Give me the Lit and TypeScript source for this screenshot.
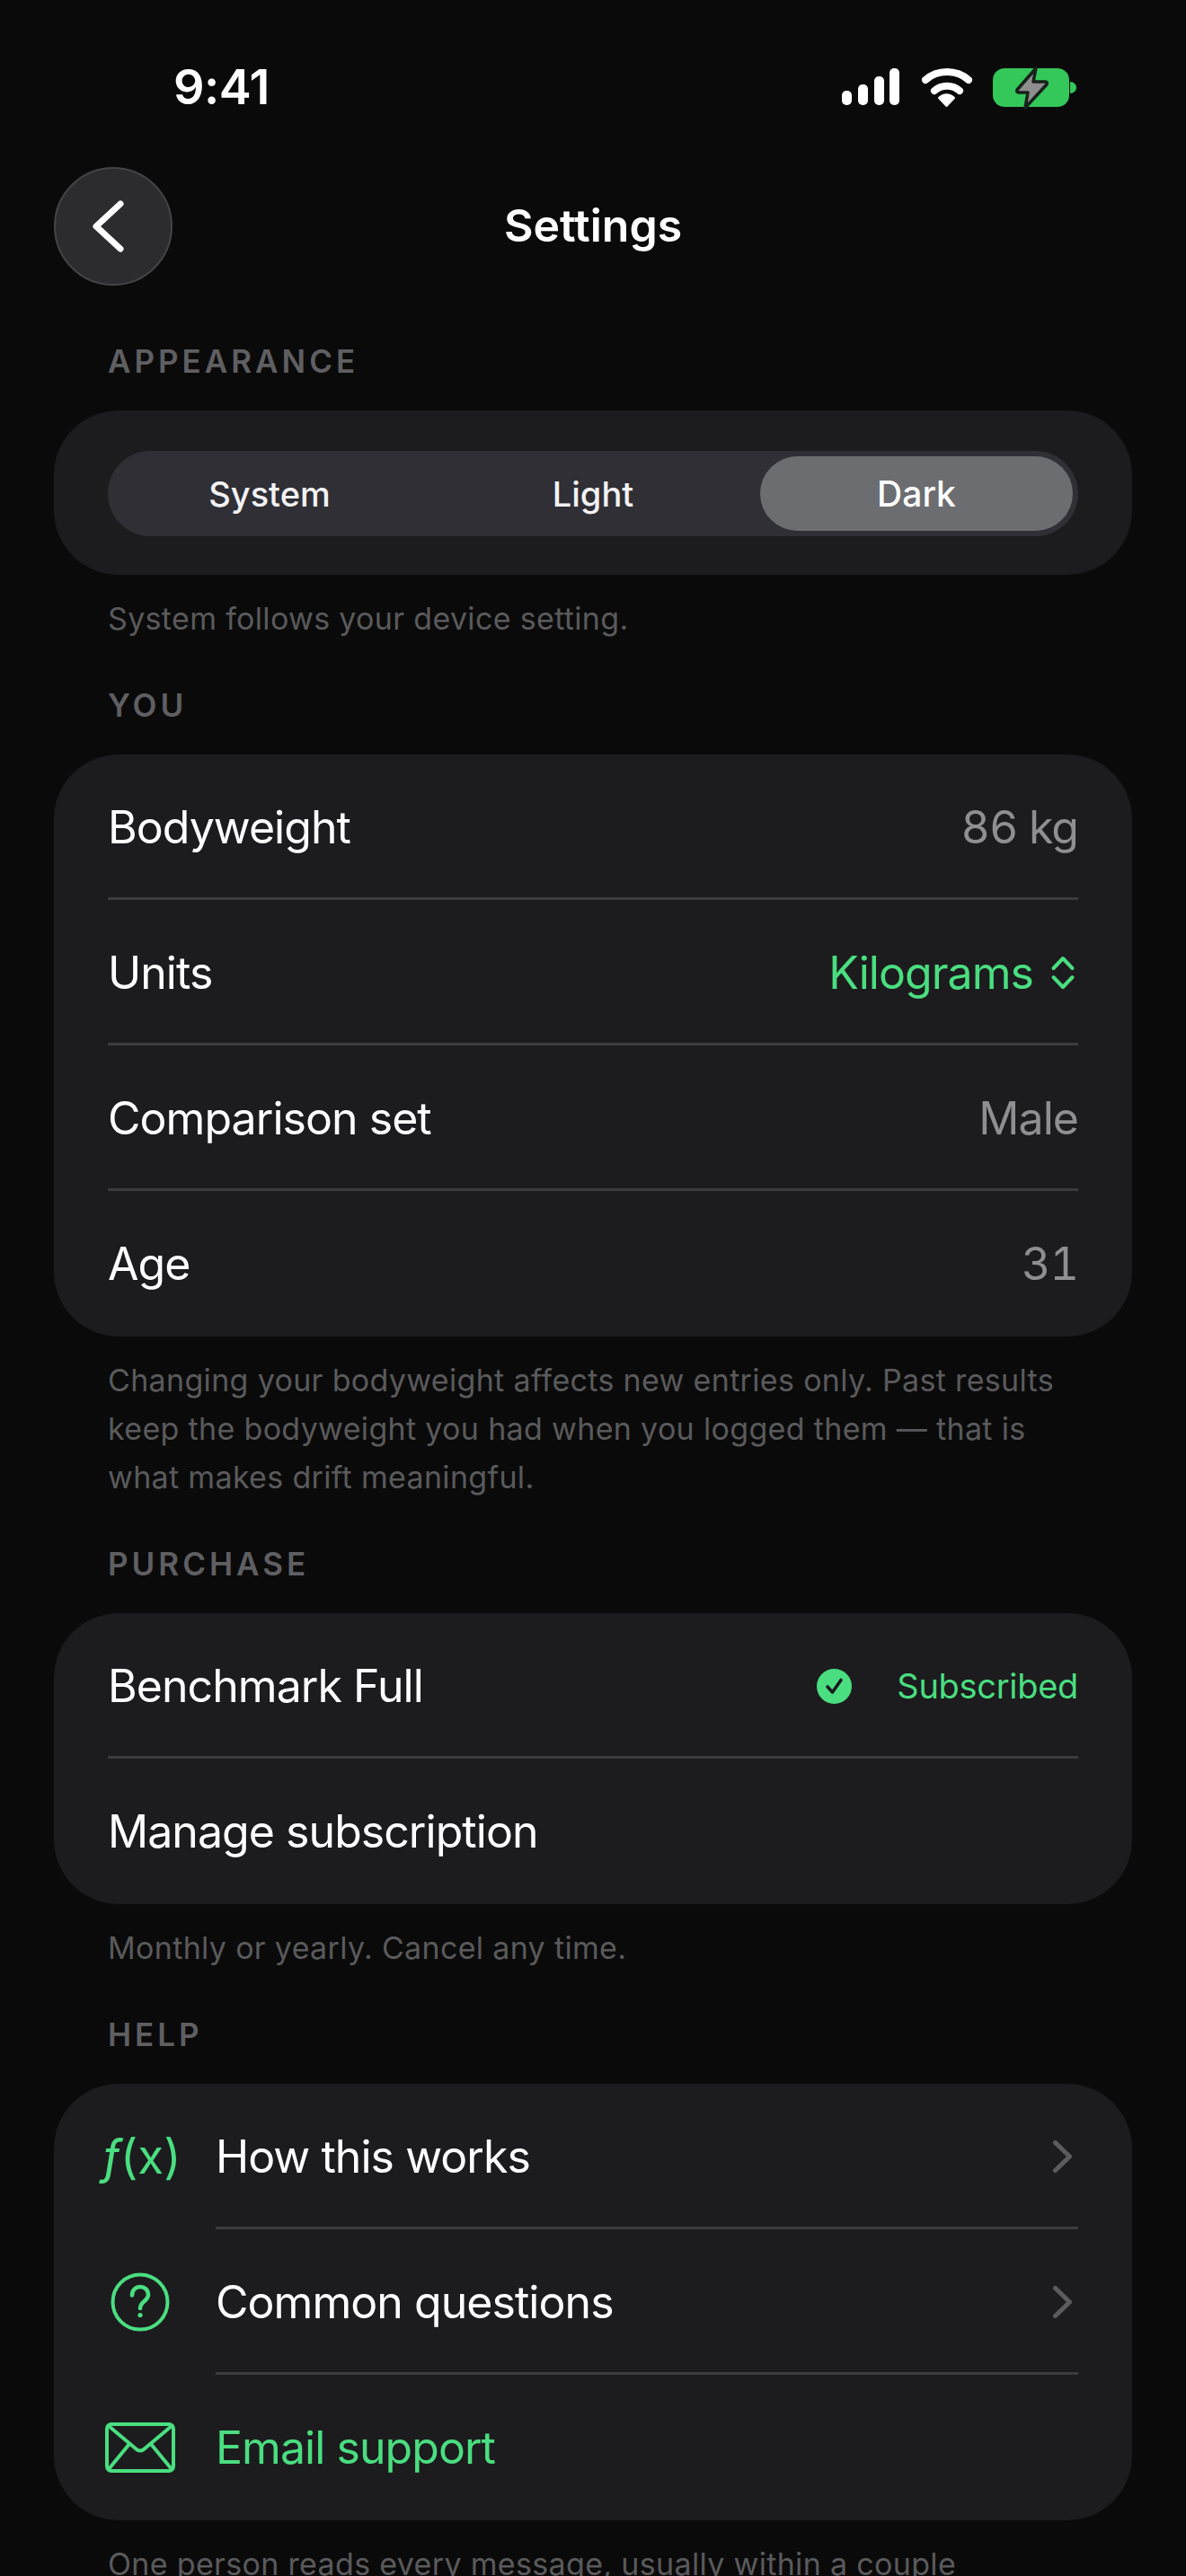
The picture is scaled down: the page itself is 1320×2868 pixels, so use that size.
import { LitElement, html, css, svg } from "lit";
import { customElement } from "lit/decorators.js";

const chevronRight = svg`<path d="M2.5 2.5 L18.5 18 L2.5 33.5" />`;

@customElement("app-root")
export class AppRoot extends LitElement {
  static styles = css`
    :host {
      display: block;
      width: 1320px;
      height: 2868px;
      overflow: hidden;
      background: #0a0a0a;
      color: #fff;
      font-family: Inter, "Noto Sans", sans-serif;
    }
    .status {
      height: 186px;
      display: flex;
      justify-content: space-between;
      padding: 0 122px 0 193px;
      box-sizing: border-box;
    }
    .time {
      font-size: 54px;
      font-weight: 600;
      line-height: 54px;
      margin-top: 70px;
      letter-spacing: -0.5px;
    }
    .status-icons {
      margin-top: 74px;
      display: block;
    }
    .nav {
      display: grid;
      grid-template-columns: 132px 1fr 132px;
      align-items: center;
      padding: 0 60px;
      height: 132px;
    }
    .back {
      width: 132px;
      height: 132px;
      box-sizing: border-box;
      border-radius: 50%;
      background: #2c2c2e;
      border: 2px solid #444446;
      display: flex;
      align-items: center;
      justify-content: center;
    }
    .back svg {
      display: block;
      margin-left: -12px;
    }
    .title {
      text-align: center;
      font-size: 50px;
      font-weight: 600;
      padding-bottom: 3px;
    }
    .content {
      padding: 63px 60px 0;
    }
    .label {
      padding-left: 60px;
      font-size: 35px;
      line-height: 42px;
      font-weight: 600;
      letter-spacing: 4px;
      color: #5f5f62;
      margin-bottom: 34px;
    }
    .card {
      background: #1c1c1e;
      border-radius: 72px;
    }
    .seg-card {
      padding: 45px 60px 43px;
    }
    .seg {
      display: grid;
      grid-template-columns: repeat(3, 1fr);
      height: 95px;
      border-radius: 48px;
      background: #2f2f35;
    }
    .seg-item {
      display: flex;
      align-items: center;
      justify-content: center;
      margin: 6px;
      border-radius: 42px;
      font-size: 38px;
      font-weight: 500;
      color: #f2f2f4;
    }
    .seg-item.on {
      background: #6c6d71;
      color: #fff;
      font-size: 39px;
    }
    .note {
      margin: 22px 0 48px;
      padding: 0 60px;
      font-size: 34px;
      line-height: 54px;
      letter-spacing: 0.33px;
      color: #5a5a5c;
    }
    .row {
      height: 162px;
      display: flex;
      align-items: center;
      padding: 0 60px;
      font-size: 50px;
      letter-spacing: -0.95px;
    }
    .row .name {
      flex: 1;
    }
    .value {
      color: #8e8e93;
      font-variant-numeric: tabular-nums;
    }
    .green {
      color: #4ade80;
    }
    .pick {
      display: flex;
      align-items: center;
      gap: 19px;
      margin-right: 3px;
    }
    .pick svg,
    .row svg {
      display: block;
      flex: none;
    }
    .small {
      font-size: 38px;
      letter-spacing: -0.3px;
    }
    .check {
      margin-right: 50px;
    }
    .divider {
      height: 3px;
      margin: -3px 60px 0;
      background: #3c3c3e;
    }
    .divider.inset {
      margin-left: 180px;
    }
    .ico {
      width: 72px;
      flex: none;
      margin-right: 48px;
      display: flex;
      align-items: center;
      justify-content: center;
    }
    .ico.fx {
      font-size: 53px;
      letter-spacing: 0;
      padding-left: 3px;
      box-sizing: border-box;
    }
    .fx i {
      font-style: italic;
    }
    .stroke {
      fill: none;
      stroke-linecap: round;
      stroke-linejoin: round;
    }
  `;

  renderStatusIcons() {
    return html`<svg class="status-icons" width="263" height="48" viewBox="0 0 263 48">
      <g fill="#fff">
        <rect x="2" y="27" width="11" height="16" rx="5" />
        <rect x="20" y="20" width="11" height="23" rx="5" />
        <rect x="38" y="11" width="11" height="32" rx="5" />
        <rect x="55" y="2" width="11" height="41" rx="5" />
      </g>
      <g fill="none" stroke="#fff" stroke-width="8" stroke-linecap="round">
        <path d="M95 15 C108 3 130 3 143 15" />
        <path d="M105 27 C113 20 125 20 133 27" />
      </g>
      <path d="M118.5 44 L110 35 C115 30 122 30 127 35 Z" fill="#fff" stroke="#fff" stroke-width="2" stroke-linejoin="round" />
      <rect x="170" y="2" width="85" height="43" rx="13" fill="#34c759" />
      <path d="M256 17 C260 17 263 20 263 23.5 C263 27 260 30 256 30 Z" fill="#34c759" />
      <path d="M218 2 L197 26 C196 28 197 29 199 29 L209 29 L206 46 L230 20 C231 18 230 17 228 17 L215 17 Z" fill="#8e8e8e" stroke="#18211b" stroke-width="3.5" stroke-linejoin="round" />
    </svg>`;
  }

  renderRow(name: string, right: unknown) {
    return html`<div class="row"><span class="name">${name}</span>${right}</div>`;
  }

  renderChevron() {
    return html`<svg width="21" height="36" viewBox="0 0 21 36" class="stroke" stroke="#5c5c5e" stroke-width="5" style="margin-right:7px">${chevronRight}</svg>`;
  }

  render() {
    return html`
      <div class="status">
        <div class="time">9:41</div>
        ${this.renderStatusIcons()}
      </div>
      <div class="nav">
        <div class="back">
          <svg width="36" height="60" viewBox="0 0 36 60" class="stroke" stroke="#fff" stroke-width="7">
            <path d="M32 5 L5 30 L32 55" />
          </svg>
        </div>
        <div class="title">Settings</div>
      </div>
      <div class="content">
        <div class="label">APPEARANCE</div>
        <div class="card seg-card">
          <div class="seg">
            <div class="seg-item">System</div>
            <div class="seg-item">Light</div>
            <div class="seg-item on">Dark</div>
          </div>
        </div>
        <div class="note">System follows your device setting.</div>

        <div class="label">YOU</div>
        <div class="card">
          ${this.renderRow("Bodyweight", html`<span class="value">86 kg</span>`)}
          <div class="divider"></div>
          ${this.renderRow(
            "Units",
            html`<span class="pick green">Kilograms
              <svg width="28" height="40" viewBox="0 0 28 40" class="stroke" stroke="#4ade80" stroke-width="4">
                <path d="M3.5 15 L14 4 L24.5 15" />
                <path d="M3.5 25 L14 36 L24.5 25" />
              </svg>
            </span>`
          )}
          <div class="divider"></div>
          ${this.renderRow("Comparison set", html`<span class="value">Male</span>`)}
          <div class="divider"></div>
          ${this.renderRow("Age", html`<span class="value">31</span>`)}
        </div>
        <div class="note">Changing your bodyweight affects new entries only. Past results keep the bodyweight you had when you logged them — that is what makes drift meaningful.</div>

        <div class="label">PURCHASE</div>
        <div class="card">
          ${this.renderRow(
            "Benchmark Full",
            html`<svg class="check" width="39" height="39" viewBox="0 0 39 39">
                <circle cx="19.5" cy="19.5" r="19.5" fill="#4ade80" />
                <path d="M12 20 L17.5 26 L27 12.5" fill="none" stroke="#1c1c1e" stroke-width="3.6" stroke-linecap="round" stroke-linejoin="round" />
              </svg>
              <span class="green small">Subscribed</span>`
          )}
          <div class="divider"></div>
          ${this.renderRow("Manage subscription", "")}
        </div>
        <div class="note">Monthly or yearly. Cancel any time.</div>

        <div class="label">HELP</div>
        <div class="card">
          <div class="row">
            <span class="ico fx green"><i>ƒ</i>(x)</span>
            <span class="name">How this works</span>
            ${this.renderChevron()}
          </div>
          <div class="divider inset"></div>
          <div class="row">
            <span class="ico">
              <svg width="66" height="66" viewBox="0 0 66 66" class="stroke" stroke="#4ade80" stroke-width="4">
                <circle cx="33" cy="33" r="30.5" />
                <path d="M24 25.5 C24 13 42 13 42 25 C42 32 33 32 33 40" stroke-width="4.5" />
                <circle cx="33" cy="47.5" r="2.6" fill="#4ade80" stroke="none" />
              </svg>
            </span>
            <span class="name">Common questions</span>
            ${this.renderChevron()}
          </div>
          <div class="divider inset"></div>
          <div class="row">
            <span class="ico">
              <svg width="78" height="56" viewBox="0 0 78 56" class="stroke" stroke="#4ade80" stroke-width="4">
                <rect x="2" y="2" width="74" height="52" rx="5" />
                <path d="M4 4 L35 30 C37 32 41 32 43 30 L74 4" />
                <path d="M27 24 L4 52 M51 24 L74 52" />
              </svg>
            </span>
            <span class="name green">Email support</span>
          </div>
        </div>
        <div class="note">One person reads every message, usually within a couple</div>
      </div>
    `;
  }
}
